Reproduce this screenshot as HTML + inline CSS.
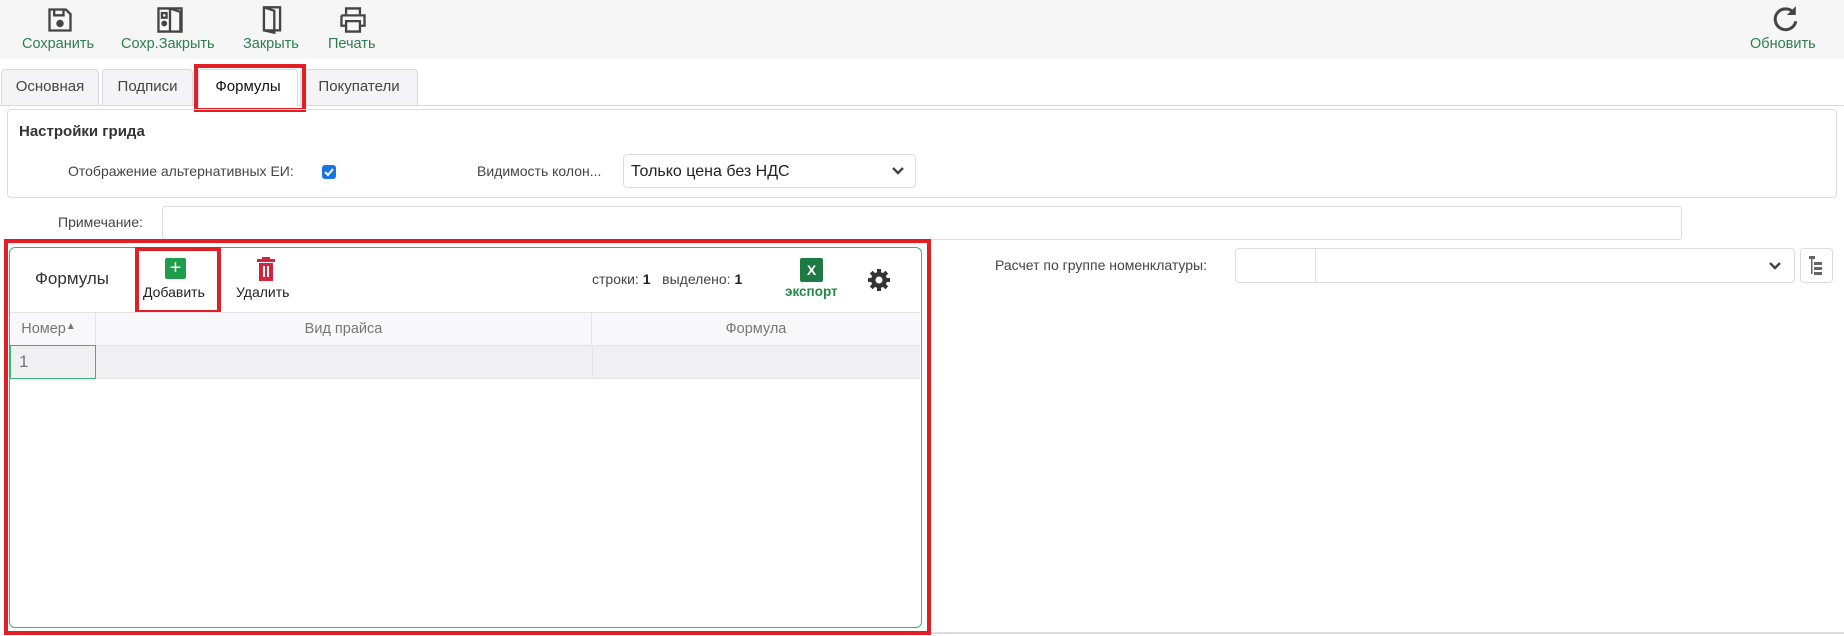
<!DOCTYPE html>
<html><head><meta charset="utf-8"><style>
*{box-sizing:border-box;margin:0;padding:0}
body{width:1844px;height:636px;background:#fff;font-family:"Liberation Sans","Noto Sans CJK SC",sans-serif;position:relative;overflow:hidden;color:#333}
.abs{position:absolute}
.tb{position:absolute;left:0;top:0;width:1844px;height:59px;background:#f6f6f6}
.tl{position:absolute;top:36px;font-size:14.5px;color:#2e7d4f;white-space:nowrap}
.tab{position:absolute;top:69px;height:36px;border:1px solid #d8d8e0;border-bottom:none;border-radius:4px 4px 0 0;background:#f4f4f6;font-size:15px;color:#444;text-align:center;line-height:34px}
.lbl{position:absolute;font-size:14px;color:#444;white-space:nowrap}
.th{position:absolute;top:313px;height:32px;line-height:32px;text-align:center;font-size:14.5px;color:#777;border-right:1px solid #e3e3e8}
</style></head><body>
<div class="tb"></div>
<svg class="abs" style="left:46px;top:6px" width="28" height="28" viewBox="0 0 24 24" fill="none" stroke="#444" stroke-width="2"><path d="M3 3h14l4 4v14H3z"/><path d="M7 3v5h8V3"/><circle cx="12" cy="15" r="2.2" fill="#444"/></svg>
<svg class="abs" style="left:155px;top:5px" width="30" height="30" viewBox="0 0 26 26" fill="none" stroke="#444" stroke-width="2"><path d="M3 3h20v20H3z"/><path d="M13 3v20"/><path d="M13 3l9 3v16"/><rect x="6" y="7" width="4" height="4"/><circle cx="8" cy="16" r="1.5" fill="#444"/></svg>
<svg class="abs" style="left:259px;top:5px" width="26" height="30" viewBox="0 0 22 26" fill="none" stroke="#444" stroke-width="2"><path d="M4 2h14v20H4z"/><path d="M4 2l9 3v19l-9-2"/></svg>
<svg class="abs" style="left:338px;top:6px" width="30" height="28" viewBox="0 0 26 24" fill="none" stroke="#444" stroke-width="2"><path d="M7 7V2h12v5"/><path d="M3 8h20v9h-4M7 17H3V8"/><path d="M7 13h12v9H7z"/></svg>
<svg class="abs" style="left:1771px;top:4px" width="30" height="30" viewBox="0 0 26 26" fill="none" stroke="#444" stroke-width="2.6"><path d="M20 8a9 9 0 1 0 1.5 7"/><path d="M21 3l0 6-6 0z" fill="#444" stroke-width="1"/></svg>
<div class="tl" style="left:22px">Сохранить</div>
<div class="tl" style="left:121px">Сохр.Закрыть</div>
<div class="tl" style="left:243px">Закрыть</div>
<div class="tl" style="left:328px">Печать</div>
<div class="tl" style="left:1750px">Обновить</div>
<div class="abs" style="left:0;top:105px;width:1844px;height:1px;background:#d8d8e0"></div>
<div class="tab" style="left:1px;width:98px">Основная</div>
<div class="tab" style="left:102px;width:91px">Подписи</div>
<div class="tab" style="left:198px;width:100px;background:#fff;height:37px;color:#111">Формулы</div>
<div class="tab" style="left:300px;width:118px">Покупатели</div>
<div class="abs" style="left:194px;top:64px;width:112px;height:48px;border:4px solid #e31e24"></div>
<div class="abs" style="left:7px;top:109px;width:1830px;height:89px;border:1px solid #dcdce4;border-radius:4px"></div>
<div class="lbl" style="left:19px;top:123px;font-weight:bold;font-size:15px;color:#333">Настройки грида</div>
<div class="lbl" style="left:68px;top:163px">Отображение альтернативных ЕИ:</div>
<div class="abs" style="left:322px;top:165px;width:14px;height:14px;background:#1a73e8;border-radius:3px"><svg width="14" height="14" viewBox="0 0 14 14"><path d="M3 7l3 3 5-6" stroke="#fff" stroke-width="2" fill="none"/></svg></div>
<div class="lbl" style="left:477px;top:163px">Видимость колон...</div>
<div class="abs" style="left:623px;top:154px;width:293px;height:34px;border:1px solid #dcdce4;border-radius:4px;font-size:16px;color:#222;line-height:34px;padding-left:7px">Только цена без НДС</div>
<svg class="abs" style="left:891px;top:166px" width="14" height="10" viewBox="0 0 14 10"><path d="M2 2l5 5 5-5" stroke="#444" stroke-width="2.4" fill="none"/></svg>
<div class="lbl" style="left:58px;top:214px">Примечание:</div>
<div class="abs" style="left:162px;top:206px;width:1520px;height:34px;border:1px solid #dcdce4;border-radius:4px"></div>
<div class="lbl" style="left:995px;top:257px">Расчет по группе номенклатуры:</div>
<div class="abs" style="left:1235px;top:248px;width:560px;height:35px;border:1px solid #dcdce4;border-radius:4px"></div>
<div class="abs" style="left:1315px;top:249px;width:1px;height:33px;background:#dcdce4"></div>
<svg class="abs" style="left:1768px;top:261px" width="14" height="10" viewBox="0 0 14 10"><path d="M2 2l5 5 5-5" stroke="#444" stroke-width="2.4" fill="none"/></svg>
<div class="abs" style="left:1800px;top:248px;width:33px;height:35px;border:1px solid #dcdce4;border-radius:4px"></div>
<svg class="abs" style="left:1808px;top:255px" width="16" height="21" viewBox="0 0 16 21" fill="#666"><rect x="1" y="1" width="6" height="3"/><rect x="3" y="4" width="1.5" height="15"/><rect x="6" y="7" width="8" height="3"/><rect x="6" y="12" width="8" height="3"/><rect x="6" y="17" width="8" height="3"/></svg>
<div class="abs" style="left:930px;top:632px;width:914px;height:2px;background:#dcdce4"></div>
<div class="abs" style="left:4px;top:239px;width:927px;height:396px;border:4px solid #e31e24"></div>
<div class="abs" style="left:9px;top:247px;width:913px;height:381px;border:1.5px solid #3cb371;border-radius:6px;background:#fff"></div>
<div class="lbl" style="left:35px;top:269px;font-size:17px;color:#333">Формулы</div>
<div class="abs" style="left:165px;top:258px;width:21px;height:21px;background:#1e9e4a;border-radius:2px;color:#fff;font-size:20px;line-height:20px;text-align:center">+</div>
<div class="lbl" style="left:143px;top:284px;color:#222">Добавить</div>
<div class="abs" style="left:135px;top:247px;width:86px;height:67px;border:4px solid #e31e24"></div>
<svg class="abs" style="left:256px;top:257px" width="20" height="24" viewBox="0 0 20 24" fill="#d6213f"><rect x="1" y="2" width="18" height="3"/><rect x="6" y="0" width="8" height="3"/><path d="M3 6h14v18H3z"/><rect x="7" y="9" width="2" height="11" fill="#fff"/><rect x="11" y="9" width="2" height="11" fill="#fff"/></svg>
<div class="lbl" style="left:236px;top:284px;color:#222">Удалить</div>
<div class="lbl" style="left:592px;top:271px;color:#444">строки: <b style="color:#222">1</b>&nbsp;&nbsp;&nbsp;выделено: <b style="color:#222">1</b></div>
<div class="abs" style="left:800px;top:258px;width:23px;height:24px;background:#1d7a44;border-radius:2px;color:#fff;font-size:14px;font-weight:bold;line-height:24px;text-align:center">X</div>
<div class="lbl" style="left:785px;top:284px;color:#1e8a45;font-weight:bold;font-size:13.5px">экспорт</div>
<svg class="abs" style="left:867px;top:268px" width="24" height="24" viewBox="0 0 24 24"><g fill="#333"><circle cx="12" cy="12" r="8"/><rect x="10" y="1" width="4" height="22"/><rect x="1" y="10" width="22" height="4"/><rect x="10" y="1" width="4" height="22" transform="rotate(45 12 12)"/><rect x="10" y="1" width="4" height="22" transform="rotate(-45 12 12)"/></g><circle cx="12" cy="12" r="3.5" fill="#fff"/></svg>
<div class="abs" style="left:10px;top:312px;width:910px;height:1px;background:#e3e3e8"></div>
<div class="abs" style="left:10px;top:313px;width:910px;height:66px;background:#f8f8fa"></div>
<div class="abs" style="left:10px;top:345px;width:910px;height:34px;background:#f0f0f3;border-top:1px solid #e3e3e8;border-bottom:1px solid #e3e3e8"></div>
<div class="th" style="left:10px;width:86px;padding-right:8px">Номер<span style="font-size:10px;position:relative;top:-4px">▲</span></div>
<div class="th" style="left:96px;width:496px">Вид прайса</div>
<div class="th" style="left:592px;width:328px;border-right:none">Формула</div>
<div class="abs" style="left:592px;top:345px;width:1px;height:34px;background:#e3e3e8"></div>
<div class="abs" style="left:10px;top:345px;width:86px;height:34px;border:1.5px solid #3cb371;font-size:17px;color:#777;line-height:31px;padding-left:8px">1</div>
</body></html>
